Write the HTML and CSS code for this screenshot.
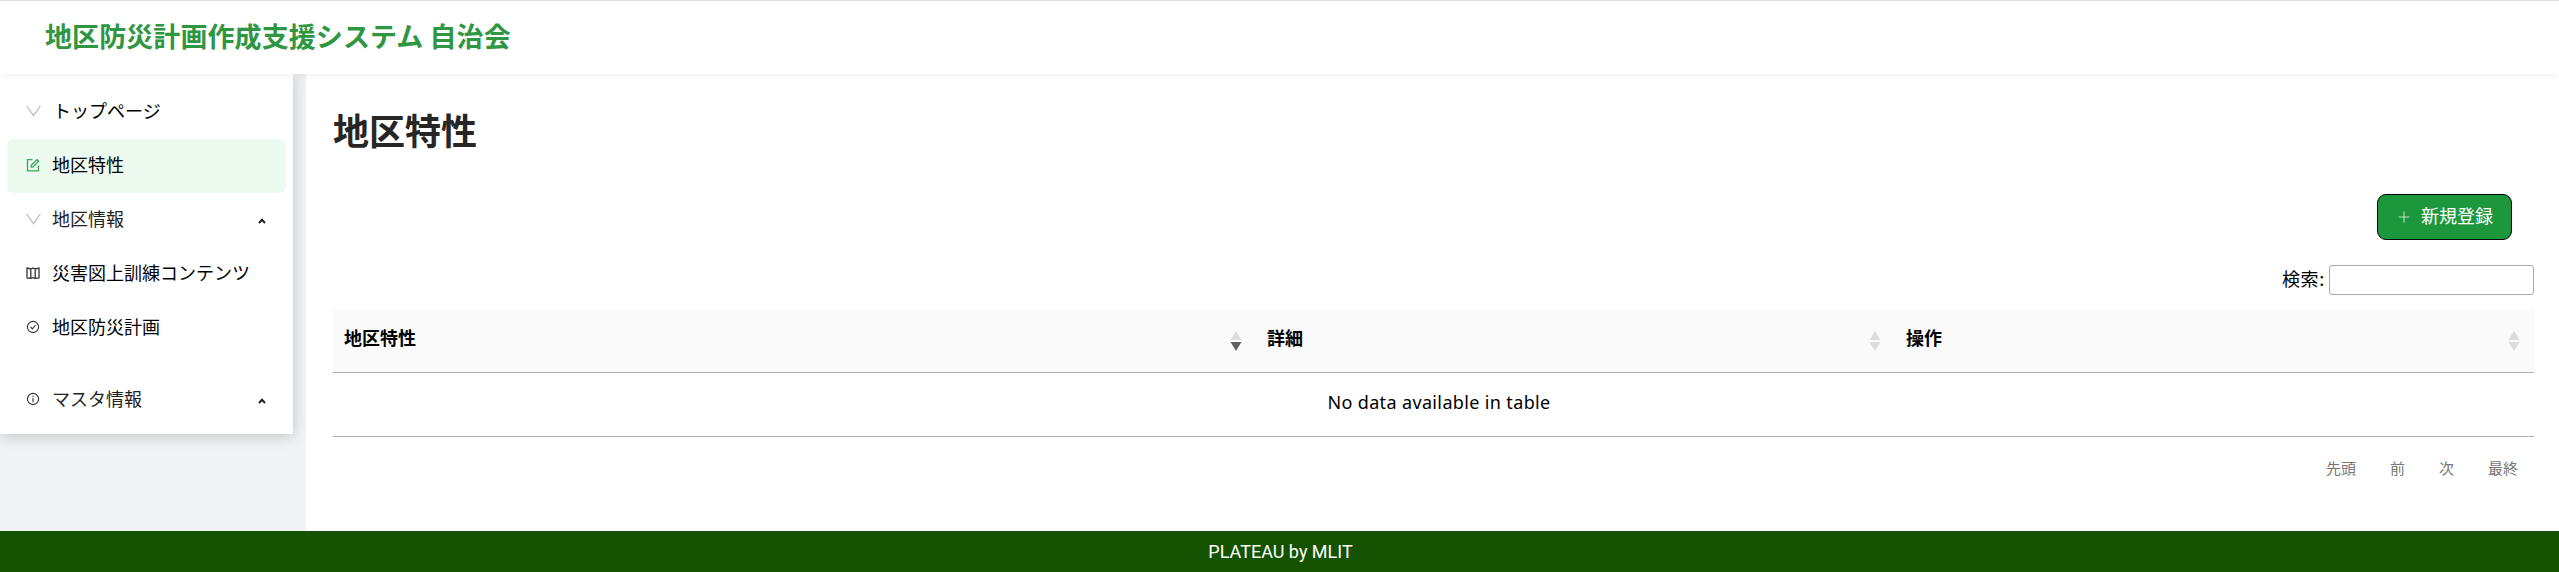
FILE: index.html
```html
<!DOCTYPE html>
<html lang="ja">
<head>
<meta charset="utf-8">
<title>地区特性</title>
<link rel="stylesheet" href="styles.css">
</head>
<body>
<header class="header"><div class="brand"><span>地区防災計画作成支援システム 自治会</span></div></header>
<div class="layout">
  <nav class="sidebar">
    <a class="item"><svg class="icon vee" viewBox="0 0 15 12"><path d="M.7 1 7.5 10.7 14.3 1"/></svg><span class="label first">トップページ</span></a>
    <a class="item active"><svg class="icon edit" viewBox="0 0 14 14"><path d="M6.5 1.7H1.5V12.8H12.5V7.5M5.2 9.2V7.2L11 1.6 12.6 3.2 6.8 9.2Z"/></svg><span class="label">地区特性</span></a>
    <a class="item group"><svg class="icon vee" viewBox="0 0 15 12"><path d="M.7 1 7.5 10.7 14.3 1"/></svg><span class="label">地区情報</span><svg class="caret" viewBox="0 0 8 6"><path d="M1 5 4 1.8 7 5"/></svg></a>
    <a class="item"><svg class="icon map" viewBox="0 0 14 14"><path d="M1 2 4.8 3 7 1.9 9.2 3 13 2V12L9.2 12.4 7 11.6 4.8 12.4 1 12ZM4.8 3V12M9.2 3V12"/></svg><span class="label">災害図上訓練コンテンツ</span></a>
    <a class="item"><svg class="icon" viewBox="0 0 14 14"><circle cx="7" cy="7" r="5.6"/><path d="M4.6 7 6.4 8.9 9.5 5"/></svg><span class="label">地区防災計画</span></a>
    <a class="item group master"><svg class="icon" viewBox="0 0 14 14"><circle cx="7" cy="7" r="5.6"/><path d="M7 6V10.2M7 3.8V5"/></svg><span class="label">マスタ情報</span><svg class="caret" viewBox="0 0 8 6"><path d="M1 5 4 1.8 7 5"/></svg></a>
  </nav>
  <main class="content">
    <h1 class="title"><span>地区特性</span></h1>
    <div class="actions"><button class="add"><svg class="plus" viewBox="0 0 12 12"><path d="M6 .5V11.5M.5 6H11.5"/></svg><span>新規登録</span></button></div>
    <div class="filter"><label class="caption" for="q">検索:</label><input id="q" class="search" type="search"></div>
    <div class="table">
      <div class="row head">
        <div class="cell"><span>地区特性</span><svg class="sort desc" viewBox="0 0 12 20"><path class="up" d="M6 0 11.5 9H.5Z"/><path class="down" d="M.5 11H11.5L6 20Z"/></svg></div>
        <div class="cell"><span>詳細</span><svg class="sort" viewBox="0 0 12 20"><path class="up" d="M6 0 11.5 9H.5Z"/><path class="down" d="M.5 11H11.5L6 20Z"/></svg></div>
        <div class="cell"><span>操作</span><svg class="sort" viewBox="0 0 12 20"><path class="up" d="M6 0 11.5 9H.5Z"/><path class="down" d="M.5 11H11.5L6 20Z"/></svg></div>
      </div>
      <div class="row empty"><span>No data available in table</span></div>
    </div>
    <div class="pager"><a>先頭</a><a>前</a><a>次</a><a>最終</a></div>
  </main>
</div>
<footer class="footer">PLATEAU by MLIT</footer>
</body>
</html>
```
FILE: styles.css
```css
* { box-sizing: border-box; }
body {
  margin: 0;
  height: 572px;
  display: flex;
  flex-direction: column;
  overflow: hidden;
  background: #f0f2f5;
  color: #000;
  font: 18px/1.5 "Noto Sans", "Noto Sans CJK JP", sans-serif;
}
.header {
  position: relative;
  z-index: 2;
  height: 74px;
  flex: none;
  display: flex;
  align-items: center;
  padding: 0 0 3px 45px;
  background: #fff;
  border-top: 1px solid #dfdfdf;
  box-shadow: 0 2px 8px rgba(0, 0, 0, .06);
}
.brand {
  color: #2f9641;
  font: 700 27px/40px "Noto Sans CJK JP", sans-serif;
  letter-spacing: .08px;
  white-space: nowrap;
}
.layout { flex: 1; display: flex; min-height: 0; }
.sidebar {
  width: 293px;
  height: 360px;
  flex: none;
  padding: 11px 7px 0;
  background: #fff;
  box-shadow: 0 2px 14px rgba(0, 0, 0, .2);
}
.item {
  height: 54px;
  display: flex;
  align-items: center;
  padding: 0 20px 4px 19px;
  border-radius: 6px;
  font-family: "Noto Sans CJK JP", sans-serif;
  font-weight: 400;
  line-height: 27px;
  white-space: nowrap;
}
.active { background: #ecfaf0; color: #000; }
.group { color: #222; }
.master { margin-top: 18px; }
.icon { width: 14px; height: 14px; margin-top: 1px; flex: none; fill: none; stroke: #333; stroke-width: 1.1; }
.map { stroke-width: 1.3; }
.vee { width: 15px; height: 12px; stroke: #bbb; stroke-width: 1.3; }
.edit { stroke: #38a755; stroke-width: 1.3; }
.label { margin-left: 12px; }
.vee + .label { margin-left: 11px; }
.vee + .first { margin-left: 12px; }
.caret { width: 8px; height: 6px; margin: 5px 0 0 auto; fill: none; stroke: #222; stroke-width: 2; }
.content { flex: 1; margin-left: 13px; padding: 28px 25px 0 27px; background: #fff; }
.title {
  margin: 0;
  height: 54px;
  color: #262626;
  font: 700 36px/54px "Noto Sans CJK JP", sans-serif;
}
.actions { display: flex; justify-content: flex-end; padding: 38px 22px 0 0; }
.add {
  width: 135px;
  height: 46px;
  display: flex;
  align-items: center;
  padding: 0 0 4px 20px;
  gap: 11px;
  border: 1px solid #000;
  border-radius: 9px;
  background: #1d973b;
  color: #fff;
  font: 400 18px/27px "Noto Sans CJK JP", sans-serif;
  white-space: nowrap;
}
.plus { width: 12px; height: 12px; margin-top: 3px; flex: none; fill: none; stroke: #b9dfc2; stroke-width: 1.1; }
.filter {
  height: 30px;
  margin-top: 25px;
  display: flex;
  align-items: center;
  justify-content: flex-end;
  gap: 4px;
  font-family: "Noto Sans CJK JP", sans-serif;
}
.caption { padding-bottom: 3px; letter-spacing: .7px; }
.search { width: 205px; height: 30px; border: 1px solid #aaa; border-radius: 3px; background: #fff; }
.table { margin-top: 14px; }
.row { height: 64px; border-bottom: 1px solid #b0b0b0; }
.head {
  display: grid;
  grid-template-columns: 923px 639px 639px;
  background: #fafafa;
  font: 700 18px/27px "Noto Sans CJK JP", sans-serif;
}
.cell { display: flex; align-items: center; justify-content: space-between; padding: 0 14px 6px 11px; }
.sort { width: 12px; height: 20px; margin-top: 6px; fill: #dcdcdc; }
.desc .down { fill: #606060; }
.empty {
  display: flex;
  align-items: center;
  justify-content: center;
  padding: 0 0 5px 11px;
  letter-spacing: .36px;
}
.pager {
  display: flex;
  justify-content: flex-end;
  gap: 34px;
  padding: 20px 16px 0 0;
  color: #777;
  font: 400 15px/22px "Noto Sans CJK JP", sans-serif;
}
.footer {
  position: relative;
  height: 41px;
  flex: none;
  padding-left: 2px;
  background: #145200;
  color: #fff;
  text-align: center;
  font: 18px/41px Roboto, sans-serif;
}
```
